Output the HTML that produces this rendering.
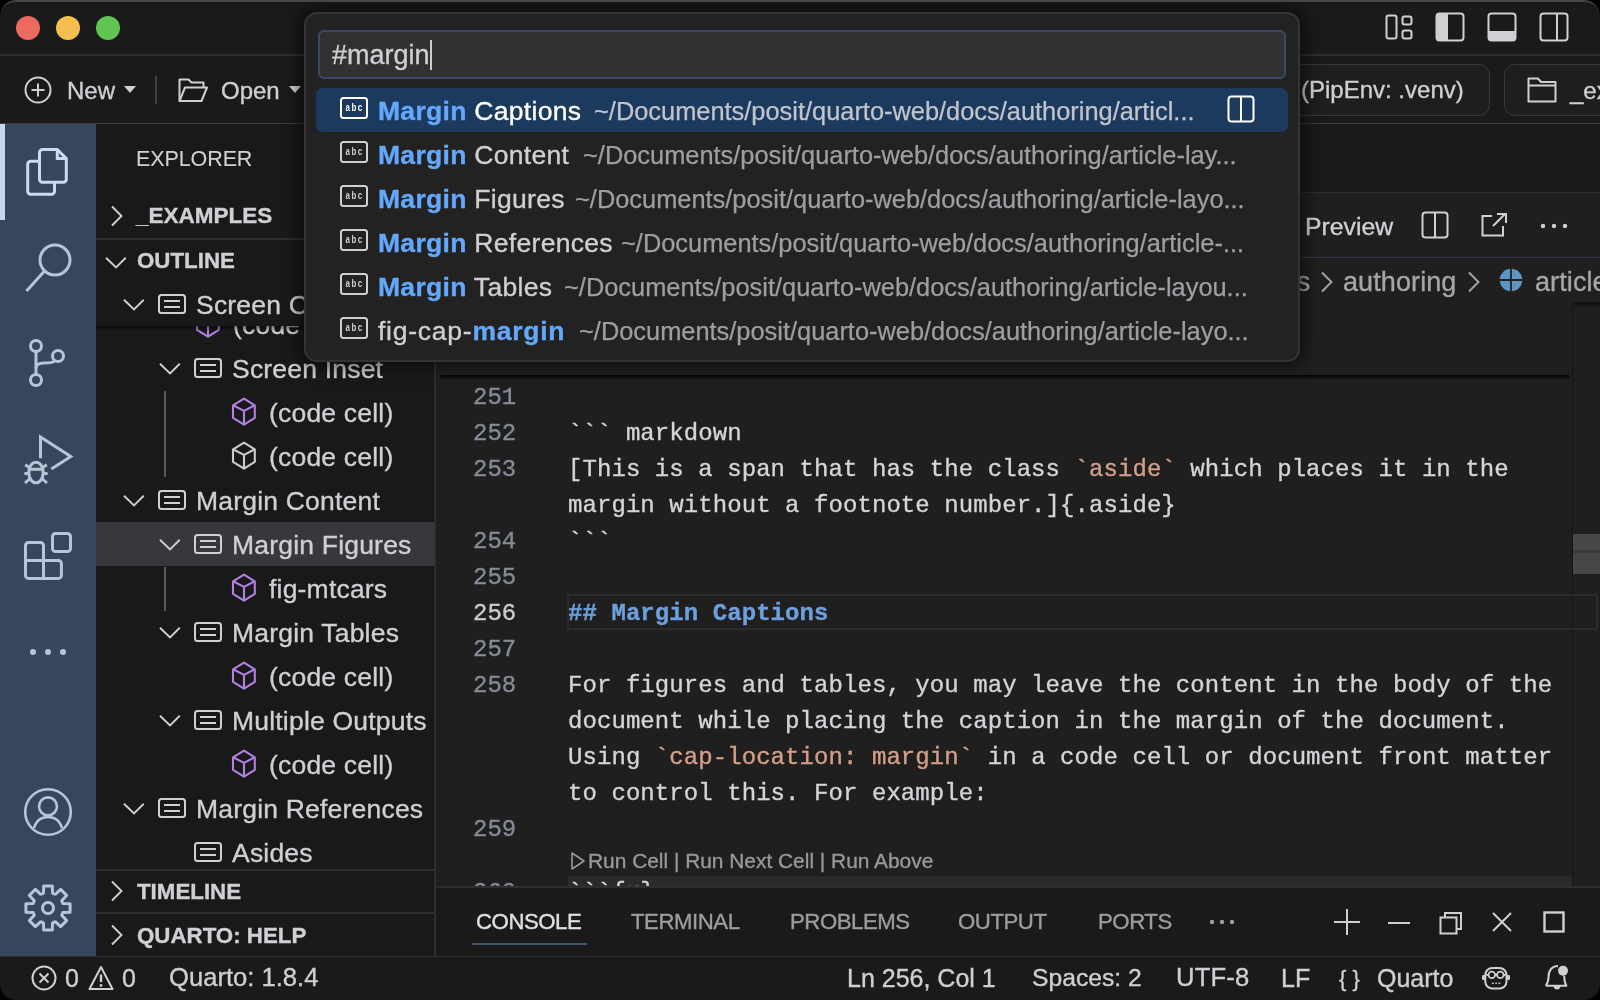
<!DOCTYPE html>
<html><head><meta charset="utf-8"><title>Positron</title>
<style>
html,body{margin:0;padding:0;background:#000;}
body{width:1600px;height:1000px;overflow:hidden;position:relative;font-family:'Liberation Sans', sans-serif;}
#w{position:absolute;left:0;top:0;width:1600px;height:1000px;overflow:hidden;border-radius:16px;}
.t{position:absolute;white-space:pre;will-change:transform;-webkit-text-stroke:0.35px currentColor;}
.r{position:absolute;box-sizing:content-box;}
.s{position:absolute;overflow:visible;}
.clip{position:absolute;overflow:hidden;}
b{font-weight:700;}
</style></head><body><div id="w">
<div class="r" style="left:0px;top:0px;width:1600px;height:1000px;background:#1a1a1a;"></div>
<div class="r" style="left:0px;top:54px;width:1600px;height:2px;background:#2e2e2e;"></div>
<svg class="s" style="left:16px;top:16px;" width="24" height="24" viewBox="0 0 24 24" fill="none"><circle cx="12" cy="12" r="12" fill="#ec6a5e"/></svg>
<svg class="s" style="left:56px;top:16px;" width="24" height="24" viewBox="0 0 24 24" fill="none"><circle cx="12" cy="12" r="12" fill="#f4bf4f"/></svg>
<svg class="s" style="left:96px;top:16px;" width="24" height="24" viewBox="0 0 24 24" fill="none"><circle cx="12" cy="12" r="12" fill="#61c554"/></svg>
<svg class="s" style="left:1384px;top:12px;" width="32" height="30" viewBox="0 0 32 30" fill="none"><rect x="2.5" y="3.5" width="10" height="23" rx="2" stroke="#cfcfd4" stroke-width="2"/><rect x="18.5" y="4.5" width="9" height="8" rx="2" stroke="#cfcfd4" stroke-width="2"/><rect x="18.5" y="18.5" width="9" height="8" rx="2" stroke="#cfcfd4" stroke-width="2"/></svg>
<svg class="s" style="left:1434px;top:11px;" width="32" height="32" viewBox="0 0 32 32" fill="none"><rect x="2.5" y="2.5" width="27" height="27" rx="3" stroke="#cfcfd4" stroke-width="2"/><path d="M3 5 a2 2 0 0 1 2-2 H14 V29 H5 a2 2 0 0 1 -2-2Z" fill="#cfcfd4"/></svg>
<svg class="s" style="left:1486px;top:11px;" width="32" height="32" viewBox="0 0 32 32" fill="none"><rect x="2.5" y="2.5" width="27" height="27" rx="3" stroke="#cfcfd4" stroke-width="2"/><path d="M3 20 H29 V27 a2 2 0 0 1 -2 2 H5 a2 2 0 0 1 -2 -2Z" fill="#cfcfd4"/></svg>
<svg class="s" style="left:1538px;top:11px;" width="32" height="32" viewBox="0 0 32 32" fill="none"><rect x="2.5" y="2.5" width="27" height="27" rx="3" stroke="#cfcfd4" stroke-width="2"/><path d="M19 3 V29" stroke="#cfcfd4" stroke-width="2"/></svg>
<div class="r" style="left:0px;top:123px;width:1600px;height:1px;background:#3a3a3a;"></div>
<svg class="s" style="left:24px;top:76px;" width="28" height="28" viewBox="0 0 28 28" fill="none"><circle cx="14" cy="14" r="12.5" stroke="#cfcfd4" stroke-width="2"/><path d="M14 7.5V20.5M7.5 14H20.5" stroke="#cfcfd4" stroke-width="2"/></svg>
<div class="t" style="left:67.0px;top:78.7px;font-size:24px;line-height:24px;color:#cfcfd4;font-weight:400;font-family:'Liberation Sans', sans-serif;">New</div>
<svg class="s" style="left:123px;top:85px;" width="14" height="10" viewBox="0 0 14 10" fill="none"><path d="M1 1H13L7 8Z" fill="#cfcfd4"/></svg>
<div class="r" style="left:155px;top:76px;width:2px;height:28px;background:#3a4250;"></div>
<svg class="s" style="left:177px;top:76px;" width="32" height="28" viewBox="0 0 32 28" fill="none"><path d="M2.5 25V3.5H11.5L14.5 6.5H26.5V11.5" stroke="#cfcfd4" stroke-width="2" stroke-linejoin="round"/><path d="M2.5 25L8 11.5H30L24.5 25Z" stroke="#cfcfd4" stroke-width="2" stroke-linejoin="round"/></svg>
<div class="t" style="left:221.0px;top:78.7px;font-size:24px;line-height:24px;color:#cfcfd4;font-weight:400;font-family:'Liberation Sans', sans-serif;">Open</div>
<svg class="s" style="left:288px;top:85px;" width="14" height="10" viewBox="0 0 14 10" fill="none"><path d="M1 1H13L7 8Z" fill="#cfcfd4"/></svg>
<div class="r" style="left:1060px;top:64px;width:428px;height:50px;border:1px solid #3a3a3a;border-radius:11px;background:#1e1e1e"></div>
<div class="t" style="left:1301.0px;top:78.2px;font-size:24px;line-height:24px;color:#cfcfd4;font-weight:400;font-family:'Liberation Sans', sans-serif;">(PipEnv: .venv)</div>
<div class="r" style="left:1504px;top:64px;width:200px;height:50px;border:1px solid #3a3a3a;border-radius:11px;background:#1e1e1e"></div>
<svg class="s" style="left:1527px;top:77px;" width="32" height="26" viewBox="0 0 32 26" fill="none"><path d="M1.5 24.5V1.5H11L14 5H28.5V24.5Z" stroke="#cfcfd4" stroke-width="2" stroke-linejoin="round"/><path d="M1.5 8.5H28.5" stroke="#cfcfd4" stroke-width="2"/></svg>
<div class="t" style="left:1570.0px;top:78.7px;font-size:24px;line-height:24px;color:#cfcfd4;font-weight:400;font-family:'Liberation Sans', sans-serif;">_ex</div>
<div class="r" style="left:0px;top:124px;width:96px;height:833px;background:#37465c;"></div>
<div class="r" style="left:0px;top:124px;width:4px;height:96px;background:#c9d7ee;"></div>
<svg class="s" style="left:24px;top:146px;" width="48" height="52" viewBox="0 0 48 52" fill="none"><path d="M15.5 15.3H6.7a3 3 0 0 0-3 3V45.3a3 3 0 0 0 3 3H27.5a3 3 0 0 0 3-3V36.3" stroke="#cddaee" stroke-width="3"/><path d="M18.5 3.5H33.3L42.3 12.6V33.3a3 3 0 0 1-3 3H18.5a3 3 0 0 1-3-3V6.5a3 3 0 0 1 3-3Z" stroke="#cddaee" stroke-width="3" stroke-linejoin="round"/><path d="M33.3 3.5V12.6H42.3" stroke="#cddaee" stroke-width="3"/></svg>
<svg class="s" style="left:24px;top:242px;" width="50" height="52" viewBox="0 0 50 52" fill="none"><circle cx="31" cy="18" r="15" stroke="#b9c4d6" stroke-width="3"/><path d="M20.5 29L3.5 48" stroke="#b9c4d6" stroke-width="3" stroke-linecap="square"/></svg>
<svg class="s" style="left:26px;top:338px;" width="44" height="52" viewBox="0 0 44 52" fill="none"><circle cx="10" cy="8" r="5.5" stroke="#b9c4d6" stroke-width="3"/><circle cx="10" cy="42" r="5.5" stroke="#b9c4d6" stroke-width="3"/><circle cx="32" cy="18" r="5.5" stroke="#b9c4d6" stroke-width="3"/><path d="M10 13.5V36.5" stroke="#b9c4d6" stroke-width="3"/><path d="M10 30C10 26 13 25 18 25C24 25 28 24 29 22.5" stroke="#b9c4d6" stroke-width="3"/></svg>
<svg class="s" style="left:22px;top:434px;" width="52" height="52" viewBox="0 0 52 52" fill="none"><path d="M18.5 24.2V3L48.8 22.4L29.3 35" stroke="#b9c4d6" stroke-width="3" stroke-linejoin="miter"/><ellipse cx="14" cy="38.5" rx="7.2" ry="10.3" stroke="#b9c4d6" stroke-width="3"/><path d="M8 35.3H20M3.2 30.8L8 34M24.8 30.8L20 34M2.4 39.5H6.5M21.5 39.5H25.6M3 49L7.5 45M25 49L20.5 45" stroke="#b9c4d6" stroke-width="3"/></svg>
<svg class="s" style="left:22px;top:530px;" width="52" height="52" viewBox="0 0 52 52" fill="none"><path d="M3.5 15.4a3 3 0 0 1 3-3H18.5a3 3 0 0 1 3 3V30.5H36.4a3 3 0 0 1 3 3V45.4a3 3 0 0 1-3 3H6.5a3 3 0 0 1-3-3Z" stroke="#b9c4d6" stroke-width="3"/><path d="M3.5 30.5H21.5V48.4" stroke="#b9c4d6" stroke-width="3"/><rect x="30.5" y="3.5" width="18" height="18" rx="3" stroke="#b9c4d6" stroke-width="3"/></svg>
<svg class="s" style="left:29px;top:648px;" width="8" height="8" viewBox="0 0 8 8" fill="none"><circle cx="4" cy="4" r="3" fill="#b9c4d6"/></svg>
<svg class="s" style="left:44px;top:648px;" width="8" height="8" viewBox="0 0 8 8" fill="none"><circle cx="4" cy="4" r="3" fill="#b9c4d6"/></svg>
<svg class="s" style="left:59px;top:648px;" width="8" height="8" viewBox="0 0 8 8" fill="none"><circle cx="4" cy="4" r="3" fill="#b9c4d6"/></svg>
<svg class="s" style="left:22px;top:786px;" width="52" height="52" viewBox="0 0 52 52" fill="none"><circle cx="26" cy="26" r="22.8" stroke="#b9c4d6" stroke-width="2.6"/><circle cx="26" cy="20.4" r="9" stroke="#b9c4d6" stroke-width="2.6"/><path d="M12 42C14 35 19 31 26 31C33 31 38 35 40 42" stroke="#b9c4d6" stroke-width="2.6"/></svg>
<svg class="s" style="left:22px;top:882px;" width="52" height="52" viewBox="0 0 52 52" fill="none"><path d="M48.09 21.71 L48.09 30.29 L40.82 30.53 L39.69 33.28 L44.65 38.58 L38.58 44.65 L33.28 39.69 L30.53 40.82 L30.29 48.09 L21.71 48.09 L21.47 40.82 L18.72 39.69 L13.42 44.65 L7.35 38.58 L12.31 33.28 L11.18 30.53 L3.91 30.29 L3.91 21.71 L11.18 21.47 L12.31 18.72 L7.35 13.42 L13.42 7.35 L18.72 12.31 L21.47 11.18 L21.71 3.91 L30.29 3.91 L30.53 11.18 L33.28 12.31 L38.58 7.35 L44.65 13.42 L39.69 18.72 L40.82 21.47Z" stroke="#b9c4d6" stroke-width="3" stroke-linejoin="round"/><circle cx="26" cy="26" r="5.5" stroke="#b9c4d6" stroke-width="3"/></svg>
<div class="r" style="left:96px;top:124px;width:339px;height:833px;background:#191919;"></div>
<div class="t" style="left:136.0px;top:148.8px;font-size:21.5px;line-height:21.5px;color:#cfcfd4;font-weight:400;font-family:'Liberation Sans', sans-serif;letter-spacing:-0.1px;-webkit-text-stroke:0.1px currentColor">EXPLORER</div>
<svg class="s" style="left:110px;top:205px;" width="14" height="22" viewBox="0 0 14 22" fill="none"><path d="M2 1.5L11.5 11L2 20.5" stroke="#cfcfd4" stroke-width="1.9"/></svg>
<div class="t" style="left:136.0px;top:204.5px;font-size:22.5px;line-height:22.5px;color:#cfcfd4;font-weight:700;font-family:'Liberation Sans', sans-serif;">_EXAMPLES</div>
<div class="r" style="left:96px;top:238px;width:339px;height:2px;background:#2e2e2e;"></div>
<svg class="s" style="left:105px;top:255px;" width="22" height="15" viewBox="0 0 22 15" fill="none"><path d="M1 2.75L11 12.5L20.75 2.75" stroke="#cfcfd4" stroke-width="1.9"/></svg>
<div class="t" style="left:137.0px;top:249.8px;font-size:22.3px;line-height:22.3px;color:#cfcfd4;font-weight:700;font-family:'Liberation Sans', sans-serif;">OUTLINE</div>
<div class="r" style="left:96px;top:522px;width:339px;height:44px;background:#37373d;"></div>
<div class="r" style="left:164px;top:391px;width:2px;height:86px;background:#585858;"></div>
<div class="r" style="left:164px;top:567px;width:2px;height:44px;background:#585858;"></div>
<div class="clip" style="left:96px;top:283px;width:339px;height:586px">
<div style="position:absolute;left:-96px;top:-283px;width:1600px;height:1000px">
<svg class="s" style="left:195px;top:309px;" width="26" height="30" viewBox="0 0 26 30" fill="none"><path d="M13 1.7L23.8 8.3V20.8L13 27.6L2 20.8V8.3Z" stroke="#b180e0" stroke-width="2.1" stroke-linejoin="round"/><path d="M2 8.3L13 13.9L23.8 8.3M13 13.9V27.6" stroke="#b180e0" stroke-width="2.1" stroke-linejoin="round"/></svg><div class="t" style="left:233.0px;top:311.6px;font-size:26.5px;line-height:26.5px;color:#cfcfd4;font-weight:400;font-family:'Liberation Sans', sans-serif;letter-spacing:0.2px">(code cell)</div>
<svg class="s" style="left:159px;top:361px;" width="22" height="15" viewBox="0 0 22 15" fill="none"><path d="M1 2.75L11 12.5L20.75 2.75" stroke="#cfcfd4" stroke-width="1.9"/></svg><svg class="s" style="left:194px;top:358px;" width="28" height="20" viewBox="0 0 28 20" fill="none"><rect x="1" y="1" width="26" height="18" rx="2.5" stroke="#cfcfd4" stroke-width="2"/><path d="M6 7.1H22M6 13H22" stroke="#cfcfd4" stroke-width="2"/></svg><div class="t" style="left:232.0px;top:355.6px;font-size:26.5px;line-height:26.5px;color:#cfcfd4;font-weight:400;font-family:'Liberation Sans', sans-serif;letter-spacing:0.2px">Screen Inset</div>
<svg class="s" style="left:231px;top:397px;" width="26" height="30" viewBox="0 0 26 30" fill="none"><path d="M13 1.7L23.8 8.3V20.8L13 27.6L2 20.8V8.3Z" stroke="#b180e0" stroke-width="2.1" stroke-linejoin="round"/><path d="M2 8.3L13 13.9L23.8 8.3M13 13.9V27.6" stroke="#b180e0" stroke-width="2.1" stroke-linejoin="round"/></svg><div class="t" style="left:268.5px;top:399.6px;font-size:26.5px;line-height:26.5px;color:#cfcfd4;font-weight:400;font-family:'Liberation Sans', sans-serif;letter-spacing:0.2px">(code cell)</div>
<svg class="s" style="left:231px;top:441px;" width="26" height="30" viewBox="0 0 26 30" fill="none"><path d="M13 1.7L23.8 8.3V20.8L13 27.6L2 20.8V8.3Z" stroke="#cccccc" stroke-width="2.1" stroke-linejoin="round"/><path d="M2 8.3L13 13.9L23.8 8.3M13 13.9V27.6" stroke="#cccccc" stroke-width="2.1" stroke-linejoin="round"/></svg><div class="t" style="left:268.5px;top:443.6px;font-size:26.5px;line-height:26.5px;color:#cfcfd4;font-weight:400;font-family:'Liberation Sans', sans-serif;letter-spacing:0.2px">(code cell)</div>
<svg class="s" style="left:123px;top:493px;" width="22" height="15" viewBox="0 0 22 15" fill="none"><path d="M1 2.75L11 12.5L20.75 2.75" stroke="#cfcfd4" stroke-width="1.9"/></svg><svg class="s" style="left:158px;top:490px;" width="28" height="20" viewBox="0 0 28 20" fill="none"><rect x="1" y="1" width="26" height="18" rx="2.5" stroke="#cfcfd4" stroke-width="2"/><path d="M6 7.1H22M6 13H22" stroke="#cfcfd4" stroke-width="2"/></svg><div class="t" style="left:196.0px;top:487.6px;font-size:26.5px;line-height:26.5px;color:#cfcfd4;font-weight:400;font-family:'Liberation Sans', sans-serif;letter-spacing:0.2px">Margin Content</div>
<svg class="s" style="left:159px;top:537px;" width="22" height="15" viewBox="0 0 22 15" fill="none"><path d="M1 2.75L11 12.5L20.75 2.75" stroke="#cfcfd4" stroke-width="1.9"/></svg><svg class="s" style="left:194px;top:534px;" width="28" height="20" viewBox="0 0 28 20" fill="none"><rect x="1" y="1" width="26" height="18" rx="2.5" stroke="#cfcfd4" stroke-width="2"/><path d="M6 7.1H22M6 13H22" stroke="#cfcfd4" stroke-width="2"/></svg><div class="t" style="left:232.0px;top:531.6px;font-size:26.5px;line-height:26.5px;color:#cfcfd4;font-weight:400;font-family:'Liberation Sans', sans-serif;letter-spacing:0.2px">Margin Figures</div>
<svg class="s" style="left:231px;top:573px;" width="26" height="30" viewBox="0 0 26 30" fill="none"><path d="M13 1.7L23.8 8.3V20.8L13 27.6L2 20.8V8.3Z" stroke="#b180e0" stroke-width="2.1" stroke-linejoin="round"/><path d="M2 8.3L13 13.9L23.8 8.3M13 13.9V27.6" stroke="#b180e0" stroke-width="2.1" stroke-linejoin="round"/></svg><div class="t" style="left:268.5px;top:575.6px;font-size:26.5px;line-height:26.5px;color:#cfcfd4;font-weight:400;font-family:'Liberation Sans', sans-serif;letter-spacing:0.2px">fig-mtcars</div>
<svg class="s" style="left:159px;top:625px;" width="22" height="15" viewBox="0 0 22 15" fill="none"><path d="M1 2.75L11 12.5L20.75 2.75" stroke="#cfcfd4" stroke-width="1.9"/></svg><svg class="s" style="left:194px;top:622px;" width="28" height="20" viewBox="0 0 28 20" fill="none"><rect x="1" y="1" width="26" height="18" rx="2.5" stroke="#cfcfd4" stroke-width="2"/><path d="M6 7.1H22M6 13H22" stroke="#cfcfd4" stroke-width="2"/></svg><div class="t" style="left:232.0px;top:619.6px;font-size:26.5px;line-height:26.5px;color:#cfcfd4;font-weight:400;font-family:'Liberation Sans', sans-serif;letter-spacing:0.2px">Margin Tables</div>
<svg class="s" style="left:231px;top:661px;" width="26" height="30" viewBox="0 0 26 30" fill="none"><path d="M13 1.7L23.8 8.3V20.8L13 27.6L2 20.8V8.3Z" stroke="#b180e0" stroke-width="2.1" stroke-linejoin="round"/><path d="M2 8.3L13 13.9L23.8 8.3M13 13.9V27.6" stroke="#b180e0" stroke-width="2.1" stroke-linejoin="round"/></svg><div class="t" style="left:268.5px;top:663.6px;font-size:26.5px;line-height:26.5px;color:#cfcfd4;font-weight:400;font-family:'Liberation Sans', sans-serif;letter-spacing:0.2px">(code cell)</div>
<svg class="s" style="left:159px;top:713px;" width="22" height="15" viewBox="0 0 22 15" fill="none"><path d="M1 2.75L11 12.5L20.75 2.75" stroke="#cfcfd4" stroke-width="1.9"/></svg><svg class="s" style="left:194px;top:710px;" width="28" height="20" viewBox="0 0 28 20" fill="none"><rect x="1" y="1" width="26" height="18" rx="2.5" stroke="#cfcfd4" stroke-width="2"/><path d="M6 7.1H22M6 13H22" stroke="#cfcfd4" stroke-width="2"/></svg><div class="t" style="left:232.0px;top:707.6px;font-size:26.5px;line-height:26.5px;color:#cfcfd4;font-weight:400;font-family:'Liberation Sans', sans-serif;letter-spacing:0.2px">Multiple Outputs</div>
<svg class="s" style="left:231px;top:749px;" width="26" height="30" viewBox="0 0 26 30" fill="none"><path d="M13 1.7L23.8 8.3V20.8L13 27.6L2 20.8V8.3Z" stroke="#b180e0" stroke-width="2.1" stroke-linejoin="round"/><path d="M2 8.3L13 13.9L23.8 8.3M13 13.9V27.6" stroke="#b180e0" stroke-width="2.1" stroke-linejoin="round"/></svg><div class="t" style="left:268.5px;top:751.6px;font-size:26.5px;line-height:26.5px;color:#cfcfd4;font-weight:400;font-family:'Liberation Sans', sans-serif;letter-spacing:0.2px">(code cell)</div>
<svg class="s" style="left:123px;top:801px;" width="22" height="15" viewBox="0 0 22 15" fill="none"><path d="M1 2.75L11 12.5L20.75 2.75" stroke="#cfcfd4" stroke-width="1.9"/></svg><svg class="s" style="left:158px;top:798px;" width="28" height="20" viewBox="0 0 28 20" fill="none"><rect x="1" y="1" width="26" height="18" rx="2.5" stroke="#cfcfd4" stroke-width="2"/><path d="M6 7.1H22M6 13H22" stroke="#cfcfd4" stroke-width="2"/></svg><div class="t" style="left:196.0px;top:795.6px;font-size:26.5px;line-height:26.5px;color:#cfcfd4;font-weight:400;font-family:'Liberation Sans', sans-serif;letter-spacing:0.2px">Margin References</div>
<svg class="s" style="left:194px;top:842px;" width="28" height="20" viewBox="0 0 28 20" fill="none"><rect x="1" y="1" width="26" height="18" rx="2.5" stroke="#cfcfd4" stroke-width="2"/><path d="M6 7.1H22M6 13H22" stroke="#cfcfd4" stroke-width="2"/></svg><div class="t" style="left:232.0px;top:839.6px;font-size:26.5px;line-height:26.5px;color:#cfcfd4;font-weight:400;font-family:'Liberation Sans', sans-serif;letter-spacing:0.2px">Asides</div>
</div></div>
<div class="r" style="left:96px;top:283px;width:339px;height:43px;background:#191919;"></div>
<div class="r" style="left:96px;top:326px;width:339px;height:6px;background:linear-gradient(rgba(0,0,0,0.45),rgba(0,0,0,0));"></div>
<div class="clip" style="left:96px;top:283px;width:339px;height:44px">
<div style="position:absolute;left:-96px;top:-283px;width:1600px;height:1000px">
<svg class="s" style="left:123px;top:297px;" width="22" height="15" viewBox="0 0 22 15" fill="none"><path d="M1 2.75L11 12.5L20.75 2.75" stroke="#cfcfd4" stroke-width="1.9"/></svg><svg class="s" style="left:158px;top:294px;" width="28" height="20" viewBox="0 0 28 20" fill="none"><rect x="1" y="1" width="26" height="18" rx="2.5" stroke="#cfcfd4" stroke-width="2"/><path d="M6 7.1H22M6 13H22" stroke="#cfcfd4" stroke-width="2"/></svg><div class="t" style="left:196.0px;top:291.6px;font-size:26.5px;line-height:26.5px;color:#cfcfd4;font-weight:400;font-family:'Liberation Sans', sans-serif;letter-spacing:0.2px">Screen Column</div>
</div></div>
<div class="r" style="left:96px;top:869px;width:339px;height:2px;background:#2e2e2e;"></div>
<svg class="s" style="left:110px;top:880px;" width="14" height="22" viewBox="0 0 14 22" fill="none"><path d="M2 1.5L11.5 11L2 20.5" stroke="#cfcfd4" stroke-width="1.9"/></svg>
<div class="t" style="left:137.0px;top:881.1px;font-size:22.3px;line-height:22.3px;color:#cfcfd4;font-weight:700;font-family:'Liberation Sans', sans-serif;">TIMELINE</div>
<div class="r" style="left:96px;top:912px;width:339px;height:2px;background:#2e2e2e;"></div>
<svg class="s" style="left:110px;top:924px;" width="14" height="22" viewBox="0 0 14 22" fill="none"><path d="M2 1.5L11.5 11L2 20.5" stroke="#cfcfd4" stroke-width="1.9"/></svg>
<div class="t" style="left:137.0px;top:925.1px;font-size:22.3px;line-height:22.3px;color:#cfcfd4;font-weight:700;font-family:'Liberation Sans', sans-serif;">QUARTO: HELP</div>
<div class="r" style="left:436px;top:124px;width:1164px;height:69px;background:#1a1a1a;"></div>
<div class="r" style="left:436px;top:192px;width:1164px;height:1px;background:#2e2e2e;"></div>
<div class="r" style="left:436px;top:193px;width:1164px;height:694px;background:#1f1f1f;"></div>
<div class="t" style="left:1305.0px;top:214.5px;font-size:24.8px;line-height:24.8px;color:#cfcfd4;font-weight:400;font-family:'Liberation Sans', sans-serif;">Preview</div>
<svg class="s" style="left:1421px;top:211px;" width="28" height="28" viewBox="0 0 28 28" fill="none"><rect x="1.5" y="1.5" width="25" height="25" rx="3" stroke="#cfcfd4" stroke-width="2"/><path d="M14 2V26" stroke="#cfcfd4" stroke-width="2"/></svg>
<svg class="s" style="left:1480px;top:212px;" width="30" height="26" viewBox="0 0 30 26" fill="none"><path d="M12 4H2.5V23.5H23V14" stroke="#cfcfd4" stroke-width="2"/><path d="M13 14L25 2M17 2H26V11" stroke="#cfcfd4" stroke-width="2"/></svg>
<svg class="s" style="left:1540px;top:223px;" width="6" height="6" viewBox="0 0 6 6" fill="none"><circle cx="3" cy="3" r="2.2" fill="#cfcfd4"/></svg>
<svg class="s" style="left:1551px;top:223px;" width="6" height="6" viewBox="0 0 6 6" fill="none"><circle cx="3" cy="3" r="2.2" fill="#cfcfd4"/></svg>
<svg class="s" style="left:1562px;top:223px;" width="6" height="6" viewBox="0 0 6 6" fill="none"><circle cx="3" cy="3" r="2.2" fill="#cfcfd4"/></svg>
<div class="r" style="left:436px;top:257px;width:1164px;height:1px;background:#2f3a48;"></div>
<div class="clip" style="left:1300px;top:258px;width:300px;height:44px"><div style="position:absolute;left:-1300px;top:-258px;width:1600px;height:1000px">
<div class="t" style="left:1253.0px;top:268.6px;font-size:27px;line-height:27px;color:#a6a6a6;font-weight:400;font-family:'Liberation Sans', sans-serif;letter-spacing:0.1px">docs</div>
<svg class="s" style="left:1320px;top:271px;" width="14" height="22" viewBox="0 0 14 22" fill="none"><path d="M2 1.5L11.5 11L2 20.5" stroke="#a6a6a6" stroke-width="1.9"/></svg>
<div class="t" style="left:1343.0px;top:268.6px;font-size:27px;line-height:27px;color:#a6a6a6;font-weight:400;font-family:'Liberation Sans', sans-serif;letter-spacing:0.1px">authoring</div>
<svg class="s" style="left:1467px;top:271px;" width="14" height="22" viewBox="0 0 14 22" fill="none"><path d="M2 1.5L11.5 11L2 20.5" stroke="#a6a6a6" stroke-width="1.9"/></svg>
<svg class="s" style="left:1498px;top:267px;" width="26" height="26" viewBox="0 0 26 26" fill="none"><circle cx="13" cy="13" r="11.3" fill="#5e94c3"/><path d="M13 1.5V24.5M1.5 13H24.5" stroke="#1f1f1f" stroke-width="1.8"/></svg>
<div class="t" style="left:1535.0px;top:268.6px;font-size:27px;line-height:27px;color:#a6a6a6;font-weight:400;font-family:'Liberation Sans', sans-serif;letter-spacing:0.1px">article-layout.qmd</div>
</div></div>
<div class="r" style="left:440px;top:375px;width:1130px;height:5px;background:linear-gradient(rgba(0,0,0,0.95),rgba(0,0,0,0));border-radius:2px"></div>
<div class="t" style="left:473.3px;top:385.6px;font-size:24px;line-height:24px;color:#858b96;font-weight:400;font-family:'Liberation Mono', monospace;">251</div>
<div class="t" style="left:473.3px;top:421.6px;font-size:24px;line-height:24px;color:#858b96;font-weight:400;font-family:'Liberation Mono', monospace;">252</div>
<div class="t" style="left:567.8px;top:421.6px;font-size:24px;line-height:24px;color:#d4d4d9;font-weight:400;font-family:'Liberation Mono', monospace;white-space:pre;letter-spacing:0.07px">``` markdown</div>
<div class="t" style="left:473.3px;top:457.6px;font-size:24px;line-height:24px;color:#858b96;font-weight:400;font-family:'Liberation Mono', monospace;">253</div>
<div class="t" style="left:567.8px;top:457.6px;font-size:24px;line-height:24px;color:#d4d4d9;font-weight:400;font-family:'Liberation Mono', monospace;white-space:pre;letter-spacing:0.07px">[This is a span that has the class <span style='color:#d49f87'>`aside`</span> which places it in the</div>
<div class="t" style="left:567.8px;top:493.6px;font-size:24px;line-height:24px;color:#d4d4d9;font-weight:400;font-family:'Liberation Mono', monospace;white-space:pre;letter-spacing:0.07px">margin without a footnote number.]{.aside}</div>
<div class="t" style="left:473.3px;top:529.6px;font-size:24px;line-height:24px;color:#858b96;font-weight:400;font-family:'Liberation Mono', monospace;">254</div>
<div class="t" style="left:567.8px;top:529.6px;font-size:24px;line-height:24px;color:#d4d4d9;font-weight:400;font-family:'Liberation Mono', monospace;white-space:pre;letter-spacing:0.07px">```</div>
<div class="t" style="left:473.3px;top:565.6px;font-size:24px;line-height:24px;color:#858b96;font-weight:400;font-family:'Liberation Mono', monospace;">255</div>
<div class="t" style="left:473.3px;top:601.6px;font-size:24px;line-height:24px;color:#cccccc;font-weight:400;font-family:'Liberation Mono', monospace;">256</div>
<div class="t" style="left:567.8px;top:601.6px;font-size:24px;line-height:24px;color:#d4d4d9;font-weight:400;font-family:'Liberation Mono', monospace;white-space:pre;letter-spacing:0.07px"><span style='color:#6c9fdc;font-weight:700'>## Margin Captions</span></div>
<div class="t" style="left:473.3px;top:637.6px;font-size:24px;line-height:24px;color:#858b96;font-weight:400;font-family:'Liberation Mono', monospace;">257</div>
<div class="t" style="left:473.3px;top:673.6px;font-size:24px;line-height:24px;color:#858b96;font-weight:400;font-family:'Liberation Mono', monospace;">258</div>
<div class="t" style="left:567.8px;top:673.6px;font-size:24px;line-height:24px;color:#d4d4d9;font-weight:400;font-family:'Liberation Mono', monospace;white-space:pre;letter-spacing:0.07px">For figures and tables, you may leave the content in the body of the</div>
<div class="t" style="left:567.8px;top:709.6px;font-size:24px;line-height:24px;color:#d4d4d9;font-weight:400;font-family:'Liberation Mono', monospace;white-space:pre;letter-spacing:0.07px">document while placing the caption in the margin of the document.</div>
<div class="t" style="left:567.8px;top:745.6px;font-size:24px;line-height:24px;color:#d4d4d9;font-weight:400;font-family:'Liberation Mono', monospace;white-space:pre;letter-spacing:0.07px">Using <span style='color:#d49f87'>`cap-location: margin`</span> in a code cell or document front matter</div>
<div class="t" style="left:567.8px;top:781.6px;font-size:24px;line-height:24px;color:#d4d4d9;font-weight:400;font-family:'Liberation Mono', monospace;white-space:pre;letter-spacing:0.07px">to control this. For example:</div>
<div class="t" style="left:473.3px;top:817.6px;font-size:24px;line-height:24px;color:#858b96;font-weight:400;font-family:'Liberation Mono', monospace;">259</div>
<svg class="s" style="left:570px;top:851px;" width="16" height="20" viewBox="0 0 16 20" fill="none"><path d="M2 2L14 10L2 18Z" stroke="#999999" stroke-width="1.6" stroke-linejoin="round"/></svg>
<div class="t" style="left:588.0px;top:851.3px;font-size:20.9px;line-height:20.9px;color:#999999;font-weight:400;font-family:'Liberation Sans', sans-serif;">Run Cell | Run Next Cell | Run Above</div>
<div class="r" style="left:568px;top:876px;width:1004px;height:11px;background:#2a2a2a;"></div>
<div class="clip" style="left:436px;top:876px;width:1136px;height:11px">
<div style="position:absolute;left:-436px;top:-876px;width:1600px;height:1000px">
<div class="t" style="left:473.3px;top:881.1px;font-size:24px;line-height:24px;color:#858b96;font-weight:400;font-family:'Liberation Mono', monospace;">260</div>
<div class="t" style="left:567.8px;top:881.1px;font-size:24px;line-height:24px;color:#d4d4d9;font-weight:400;font-family:'Liberation Mono', monospace;white-space:pre;letter-spacing:0.07px">```{r}</div>
</div></div>
<div class="r" style="left:1572px;top:302px;width:1px;height:584px;background:#141414;"></div>
<div class="r" style="left:1574px;top:302px;width:26px;height:6px;background:linear-gradient(rgba(0,0,0,0.5),rgba(0,0,0,0));"></div>
<div class="r" style="left:1573px;top:534px;width:27px;height:40px;background:#474747;"></div>
<div class="r" style="left:1573px;top:550px;width:27px;height:3px;background:#3a3a3a;"></div>
<div class="r" style="left:567px;top:594px;width:1027px;height:32px;border:2px solid #2b2b2b"></div>
<div class="r" style="left:436px;top:887px;width:1164px;height:70px;background:#1a1a1a;"></div>
<div class="r" style="left:436px;top:886px;width:1164px;height:2px;background:#2e2e2e;"></div>
<div class="t" style="left:476.0px;top:911.4px;font-size:22.2px;line-height:22.2px;color:#e0e0e0;font-weight:400;font-family:'Liberation Sans', sans-serif;letter-spacing:-0.45px">CONSOLE</div>
<div class="r" style="left:472px;top:943px;width:115px;height:2px;background:#42546f;"></div>
<div class="t" style="left:631.0px;top:911.4px;font-size:22.2px;line-height:22.2px;color:#9d9d9d;font-weight:400;font-family:'Liberation Sans', sans-serif;letter-spacing:-0.45px">TERMINAL</div>
<div class="t" style="left:790.0px;top:911.4px;font-size:22.2px;line-height:22.2px;color:#9d9d9d;font-weight:400;font-family:'Liberation Sans', sans-serif;letter-spacing:-0.45px">PROBLEMS</div>
<div class="t" style="left:958.0px;top:911.4px;font-size:22.2px;line-height:22.2px;color:#9d9d9d;font-weight:400;font-family:'Liberation Sans', sans-serif;letter-spacing:-0.45px">OUTPUT</div>
<div class="t" style="left:1098.0px;top:911.4px;font-size:22.2px;line-height:22.2px;color:#9d9d9d;font-weight:400;font-family:'Liberation Sans', sans-serif;letter-spacing:-0.45px">PORTS</div>
<svg class="s" style="left:1209px;top:919px;" width="6" height="6" viewBox="0 0 6 6" fill="none"><circle cx="3" cy="3" r="2.2" fill="#9d9d9d"/></svg>
<svg class="s" style="left:1219px;top:919px;" width="6" height="6" viewBox="0 0 6 6" fill="none"><circle cx="3" cy="3" r="2.2" fill="#9d9d9d"/></svg>
<svg class="s" style="left:1229px;top:919px;" width="6" height="6" viewBox="0 0 6 6" fill="none"><circle cx="3" cy="3" r="2.2" fill="#9d9d9d"/></svg>
<svg class="s" style="left:1333px;top:908px;" width="28" height="28" viewBox="0 0 28 28" fill="none"><path d="M14 1V27M1 14H27" stroke="#cfcfd4" stroke-width="2"/></svg>
<svg class="s" style="left:1386px;top:920px;" width="26" height="6" viewBox="0 0 26 6" fill="none"><path d="M2 3H24" stroke="#cfcfd4" stroke-width="2"/></svg>
<svg class="s" style="left:1438px;top:910px;" width="26" height="26" viewBox="0 0 26 26" fill="none"><rect x="2.5" y="7.5" width="16" height="16" stroke="#cfcfd4" stroke-width="2"/><path d="M7 7V3H23V19H19" stroke="#cfcfd4" stroke-width="2"/></svg>
<svg class="s" style="left:1491px;top:911px;" width="22" height="22" viewBox="0 0 22 22" fill="none"><path d="M2 2L20 20M20 2L2 20" stroke="#cfcfd4" stroke-width="2"/></svg>
<svg class="s" style="left:1542px;top:910px;" width="24" height="24" viewBox="0 0 24 24" fill="none"><rect x="2.5" y="2.5" width="19" height="19" stroke="#cfcfd4" stroke-width="2.4"/></svg>
<div class="r" style="left:434px;top:124px;width:2px;height:833px;background:#2e2e2e;"></div>
<div class="r" style="left:0px;top:956px;width:1600px;height:2px;background:#2e2e2e;"></div>
<div class="r" style="left:0px;top:957px;width:1600px;height:43px;background:#1a1a1a;"></div>
<svg class="s" style="left:31px;top:965px;" width="26" height="26" viewBox="0 0 26 26" fill="none"><circle cx="13" cy="13" r="11.5" stroke="#cfcfd4" stroke-width="2"/><path d="M8.5 8.5L17.5 17.5M17.5 8.5L8.5 17.5" stroke="#cfcfd4" stroke-width="2"/></svg>
<div class="t" style="left:65.0px;top:965.8px;font-size:25px;line-height:25px;color:#cfcfd4;font-weight:400;font-family:'Liberation Sans', sans-serif;">0</div>
<svg class="s" style="left:88px;top:965px;" width="26" height="26" viewBox="0 0 26 26" fill="none"><path d="M13 2L24.5 24H1.5Z" stroke="#cfcfd4" stroke-width="2" stroke-linejoin="round"/><path d="M13 9.5V17" stroke="#cfcfd4" stroke-width="2.4"/><circle cx="13" cy="20.5" r="1.4" fill="#cfcfd4"/></svg>
<div class="t" style="left:122.0px;top:965.8px;font-size:25px;line-height:25px;color:#cfcfd4;font-weight:400;font-family:'Liberation Sans', sans-serif;">0</div>
<div class="t" style="left:169.0px;top:965.3px;font-size:25.6px;line-height:25.6px;color:#cfcfd4;font-weight:400;font-family:'Liberation Sans', sans-serif;">Quarto: 1.8.4</div>
<div class="t" style="left:847.0px;top:965.8px;font-size:25px;line-height:25px;color:#cfcfd4;font-weight:400;font-family:'Liberation Sans', sans-serif;">Ln 256, Col 1</div>
<div class="t" style="left:1032.0px;top:966.1px;font-size:24.7px;line-height:24.7px;color:#cfcfd4;font-weight:400;font-family:'Liberation Sans', sans-serif;">Spaces: 2</div>
<div class="t" style="left:1175.5px;top:965.3px;font-size:25.6px;line-height:25.6px;color:#cfcfd4;font-weight:400;font-family:'Liberation Sans', sans-serif;letter-spacing:0.2px">UTF-8</div>
<div class="t" style="left:1281.0px;top:965.8px;font-size:25px;line-height:25px;color:#cfcfd4;font-weight:400;font-family:'Liberation Sans', sans-serif;">LF</div>
<div class="t" style="left:1339.0px;top:968.4px;font-size:22px;line-height:22px;color:#cfcfd4;font-weight:400;font-family:'Liberation Sans', sans-serif;letter-spacing:0px">{ }</div>
<div class="t" style="left:1377.0px;top:965.8px;font-size:25px;line-height:25px;color:#cfcfd4;font-weight:400;font-family:'Liberation Sans', sans-serif;">Quarto</div>
<svg class="s" style="left:1481px;top:964px;" width="30" height="30" viewBox="0 0 30 30" fill="none"><rect x="4.3" y="4" width="21.2" height="20.5" rx="7" stroke="#cfcfd4" stroke-width="2"/><rect x="1" y="11" width="3" height="5" rx="1.3" fill="#cfcfd4"/><rect x="26" y="11" width="3" height="5" rx="1.3" fill="#cfcfd4"/><circle cx="10.8" cy="10.9" r="3.3" stroke="#cfcfd4" stroke-width="1.8"/><circle cx="19.3" cy="10.9" r="3.3" stroke="#cfcfd4" stroke-width="1.8"/><path d="M4.5 10.9H7.5M14.1 10.9H16M22.6 10.9H25.5" stroke="#cfcfd4" stroke-width="1.6"/><path d="M11 19.2H12.6M14.3 19.2H15.9M17.6 19.2H19.2" stroke="#cfcfd4" stroke-width="1.6"/></svg>
<svg class="s" style="left:1544px;top:962px;" width="30" height="30" viewBox="0 0 30 30" fill="none"><path d="M1.8 23.8H22.4C20.6 20.8 20.2 17 20.2 13.5M1.8 23.8C4.2 20.5 4.6 17 4.6 14C4.6 8 8.5 4 14 4" stroke="#cfcfd4" stroke-width="2" stroke-linejoin="round"/><path d="M9.6 24A3.4 3.4 0 0 0 16.4 24Z" fill="#cfcfd4"/><circle cx="19" cy="8.8" r="5" fill="#cfcfd4"/></svg>
<div class="r" style="left:304px;top:12px;width:992px;height:346px;background:#222222;border:2px solid #333333;border-radius:13px;box-shadow:0 0 16px 4px rgba(0,0,0,0.6)"></div>
<div class="r" style="left:318px;top:30px;width:964px;height:45px;background:#313131;border:2px solid #3a4a64;border-radius:6px"></div>
<div class="t" style="left:332.0px;top:42.1px;font-size:27px;line-height:27px;color:#cfcfd4;font-weight:400;font-family:'Liberation Sans', sans-serif;">#margin</div>
<div class="r" style="left:430px;top:40px;width:2px;height:30px;background:#cccccc;"></div>
<div class="r" style="left:316px;top:88px;width:972px;height:44px;background:#1c3a5e;border-radius:7px"></div>
<svg class="s" style="left:339px;top:96px;" width="30" height="24" viewBox="0 0 30 24" fill="none"><rect x="2" y="2" width="26" height="20" rx="2.5" stroke="#ffffff" stroke-width="2"/><text transform="scale(0.76,1)" x="8.6 16.5 24.6" y="15.3" font-family="Liberation Sans" font-size="10.5" font-weight="700" fill="#ffffff">abc</text></svg>
<div class="t" style="left:377.8px;top:97.6px;font-size:26.5px;line-height:26.5px;color:#cfcfd4;font-weight:400;font-family:'Liberation Sans', sans-serif;white-space:pre;letter-spacing:0.3px"><b style='color:#63a8fd'>Margin</b> <span style='color:#ffffff'>Captions</span></div>
<div class="t" style="left:594.0px;top:98.9px;font-size:25.4px;line-height:25.4px;color:#c0c4cc;font-weight:400;font-family:'Liberation Sans', sans-serif;white-space:pre;-webkit-text-stroke:0.25px currentColor">~/Documents/posit/quarto-web/docs/authoring/articl...</div>
<svg class="s" style="left:339px;top:140px;" width="30" height="24" viewBox="0 0 30 24" fill="none"><rect x="2" y="2" width="26" height="20" rx="2.5" stroke="#cfcfd4" stroke-width="2"/><text transform="scale(0.76,1)" x="8.6 16.5 24.6" y="15.3" font-family="Liberation Sans" font-size="10.5" font-weight="700" fill="#cfcfd4">abc</text></svg>
<div class="t" style="left:377.8px;top:141.6px;font-size:26.5px;line-height:26.5px;color:#cfcfd4;font-weight:400;font-family:'Liberation Sans', sans-serif;white-space:pre;letter-spacing:0.3px"><b style='color:#63a8fd'>Margin</b> Content</div>
<div class="t" style="left:583.0px;top:142.9px;font-size:25.4px;line-height:25.4px;color:#9e9ea3;font-weight:400;font-family:'Liberation Sans', sans-serif;white-space:pre;-webkit-text-stroke:0.25px currentColor">~/Documents/posit/quarto-web/docs/authoring/article-lay...</div>
<svg class="s" style="left:339px;top:184px;" width="30" height="24" viewBox="0 0 30 24" fill="none"><rect x="2" y="2" width="26" height="20" rx="2.5" stroke="#cfcfd4" stroke-width="2"/><text transform="scale(0.76,1)" x="8.6 16.5 24.6" y="15.3" font-family="Liberation Sans" font-size="10.5" font-weight="700" fill="#cfcfd4">abc</text></svg>
<div class="t" style="left:377.8px;top:185.6px;font-size:26.5px;line-height:26.5px;color:#cfcfd4;font-weight:400;font-family:'Liberation Sans', sans-serif;white-space:pre;letter-spacing:0.3px"><b style='color:#63a8fd'>Margin</b> Figures</div>
<div class="t" style="left:575.0px;top:186.9px;font-size:25.4px;line-height:25.4px;color:#9e9ea3;font-weight:400;font-family:'Liberation Sans', sans-serif;white-space:pre;-webkit-text-stroke:0.25px currentColor">~/Documents/posit/quarto-web/docs/authoring/article-layo...</div>
<svg class="s" style="left:339px;top:228px;" width="30" height="24" viewBox="0 0 30 24" fill="none"><rect x="2" y="2" width="26" height="20" rx="2.5" stroke="#cfcfd4" stroke-width="2"/><text transform="scale(0.76,1)" x="8.6 16.5 24.6" y="15.3" font-family="Liberation Sans" font-size="10.5" font-weight="700" fill="#cfcfd4">abc</text></svg>
<div class="t" style="left:377.8px;top:229.6px;font-size:26.5px;line-height:26.5px;color:#cfcfd4;font-weight:400;font-family:'Liberation Sans', sans-serif;white-space:pre;letter-spacing:0.3px"><b style='color:#63a8fd'>Margin</b> References</div>
<div class="t" style="left:621.0px;top:230.9px;font-size:25.4px;line-height:25.4px;color:#9e9ea3;font-weight:400;font-family:'Liberation Sans', sans-serif;white-space:pre;-webkit-text-stroke:0.25px currentColor">~/Documents/posit/quarto-web/docs/authoring/article-...</div>
<svg class="s" style="left:339px;top:272px;" width="30" height="24" viewBox="0 0 30 24" fill="none"><rect x="2" y="2" width="26" height="20" rx="2.5" stroke="#cfcfd4" stroke-width="2"/><text transform="scale(0.76,1)" x="8.6 16.5 24.6" y="15.3" font-family="Liberation Sans" font-size="10.5" font-weight="700" fill="#cfcfd4">abc</text></svg>
<div class="t" style="left:377.8px;top:273.6px;font-size:26.5px;line-height:26.5px;color:#cfcfd4;font-weight:400;font-family:'Liberation Sans', sans-serif;white-space:pre;letter-spacing:0.3px"><b style='color:#63a8fd'>Margin</b> Tables</div>
<div class="t" style="left:564.0px;top:274.9px;font-size:25.4px;line-height:25.4px;color:#9e9ea3;font-weight:400;font-family:'Liberation Sans', sans-serif;white-space:pre;-webkit-text-stroke:0.25px currentColor">~/Documents/posit/quarto-web/docs/authoring/article-layou...</div>
<svg class="s" style="left:339px;top:316px;" width="30" height="24" viewBox="0 0 30 24" fill="none"><rect x="2" y="2" width="26" height="20" rx="2.5" stroke="#cfcfd4" stroke-width="2"/><text transform="scale(0.76,1)" x="8.6 16.5 24.6" y="15.3" font-family="Liberation Sans" font-size="10.5" font-weight="700" fill="#cfcfd4">abc</text></svg>
<div class="t" style="left:377.8px;top:317.6px;font-size:26.5px;line-height:26.5px;color:#cfcfd4;font-weight:400;font-family:'Liberation Sans', sans-serif;white-space:pre;letter-spacing:0.75px">fig-cap-<b style='color:#63a8fd'>margin</b></div>
<div class="t" style="left:579.0px;top:318.9px;font-size:25.4px;line-height:25.4px;color:#9e9ea3;font-weight:400;font-family:'Liberation Sans', sans-serif;white-space:pre;-webkit-text-stroke:0.25px currentColor">~/Documents/posit/quarto-web/docs/authoring/article-layo...</div>
<svg class="s" style="left:1227px;top:95px;" width="28" height="28" viewBox="0 0 28 28" fill="none"><rect x="1.5" y="1.5" width="25" height="25" rx="3" stroke="#ffffff" stroke-width="2"/><path d="M14 2V26" stroke="#ffffff" stroke-width="2"/></svg>
<div class="r" style="left:0;top:0;width:1600px;height:998px;border-top:2px solid #474747;border-radius:16px;box-shadow:0 0 0 12px #000"></div>
<div class="r" style="left:0px;top:124px;width:5px;height:96px;background:#c9d7ee;"></div>
</div></body></html>
